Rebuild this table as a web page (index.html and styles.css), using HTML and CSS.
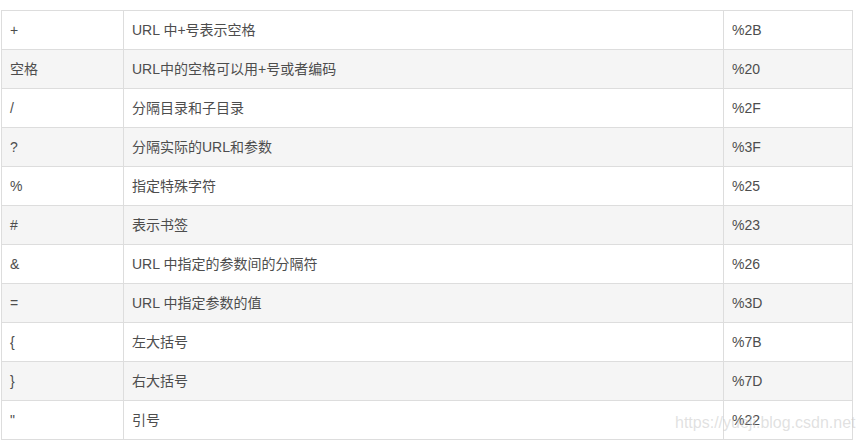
FILE: index.html
```html
<!DOCTYPE html>
<html lang="zh">
<head>
<meta charset="utf-8">
<link rel="stylesheet" href="styles.css">
</head>
<body>
<div class="page">
  <table class="codes">
    <colgroup><col class="c1"><col class="c2"><col class="c3"></colgroup>
    <tbody>
      <tr><td>+</td><td>URL 中+号表示空格</td><td>%2B</td></tr>
      <tr><td>空格</td><td>URL中的空格可以用+号或者编码</td><td>%20</td></tr>
      <tr><td>/</td><td>分隔目录和子目录</td><td>%2F</td></tr>
      <tr><td>?</td><td>分隔实际的URL和参数</td><td>%3F</td></tr>
      <tr><td>%</td><td>指定特殊字符</td><td>%25</td></tr>
      <tr><td>#</td><td>表示书签</td><td>%23</td></tr>
      <tr><td>&amp;</td><td>URL 中指定的参数间的分隔符</td><td>%26</td></tr>
      <tr><td>=</td><td>URL 中指定参数的值</td><td>%3D</td></tr>
      <tr><td>{</td><td>左大括号</td><td>%7B</td></tr>
      <tr><td>}</td><td>右大括号</td><td>%7D</td></tr>
      <tr><td>"</td><td>引号</td><td>%22</td></tr>
    </tbody>
  </table>
  <div class="watermark">https://yueji.blog.csdn.net</div>
</div>
</body>
</html>
```
FILE: styles.css
```css
html, body {
  margin: 0;
  padding: 0;
  background: #fff;
}
.page {
  position: relative;
  padding: 10px 0 0 1px;
  width: 865px;
  height: 445px;
  box-sizing: border-box;
}
.codes {
  border-collapse: collapse;
  table-layout: fixed;
  width: 852px;
  font-family: "Liberation Sans", "Noto Sans CJK SC", sans-serif;
  font-size: 14px;
  color: #4d4d4d;
}
.codes .c1 { width: 122px; }
.codes .c2 { width: 600px; }
.codes td {
  border: 1px solid #ddd;
  padding: 10px 8px;
  line-height: 18px;
  height: 18px;
  text-align: left;
  white-space: nowrap;
}
.codes tr:nth-child(even) td {
  background: #f5f5f5;
}
.watermark {
  position: absolute;
  left: 675px;
  top: 413px;
  font-family: "Liberation Sans", sans-serif;
  font-size: 16px;
  line-height: 20px;
  color: rgba(200, 200, 200, 0.55);
  pointer-events: none;
}
```
